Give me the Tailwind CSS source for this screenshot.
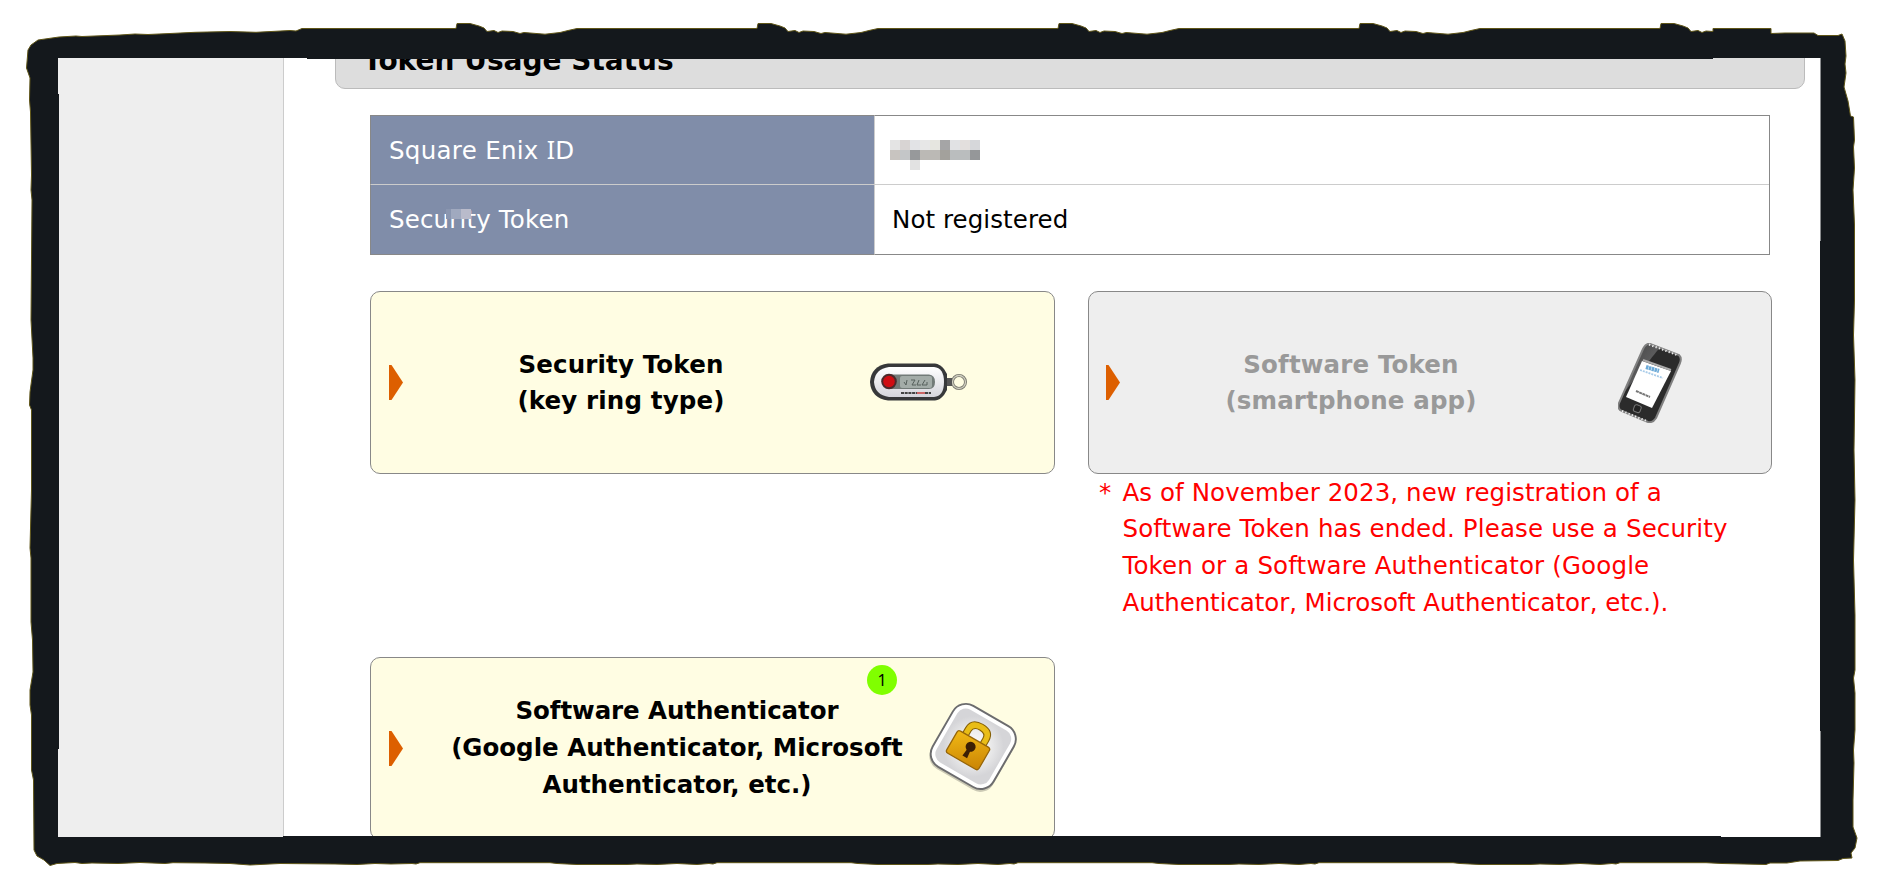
<!DOCTYPE html>
<html lang="en">
<head>
<meta charset="utf-8">
<title>Token Usage Status</title>
<script src="https://cdn.jsdelivr.net/npm/@tailwindcss/browser@4"></script>
</head>
<body class="bg-white">
<div class="relative w-[1878px] h-[894px] overflow-hidden pl-[58px] pt-[58px] pr-[57px] pb-[57px] font-['DejaVu_Sans',sans-serif] text-[24.5px] leading-[36.75px] text-black">
  <div class="flex h-full overflow-hidden">
    <aside class="w-[226px] shrink-0 bg-[#eeeeee] border-r border-[#cccccc]"></aside>
    <main class="flex-1 pl-[51px] pr-[16px] overflow-hidden">
      <h1 class="-mt-[29px] h-[60px] flex items-end rounded-[10px] border border-[#bbbbbb] bg-[#dddddd] pl-[27px] pb-[9px] text-[28px] leading-9 font-bold"><span>Token Usage Status</span></h1>

      <div class="ml-[35px] mt-[26px] w-[1400px] grid grid-cols-[504px_1fr] h-[140px] grid-rows-[69px_71px] border-r border-[#888888]">
        <div class="bg-[#808da9] border-t border-l border-[#888888] text-white pl-[18px] pt-[16px]"><span class="tracking-[0.3px]">Square Enix <span class="font-['Noto_Sans']">I</span>D</span></div>
        <div class="border-t border-l border-t-[#888888] border-l-[#cccccc] pl-[15px] pt-[24px]">
          <div class="grid grid-cols-[repeat(9,10px)] auto-rows-[10px]">
            <i class="bg-[#e4e4e4]"></i><i class="bg-[#d8d4d3]"></i><i class="bg-[#e2e3e6]"></i><i class="bg-[#e7e7e7]"></i><i class="bg-[#e6e6e0]"></i><i class="bg-[#a5a5a6]"></i><i class="bg-[#e1e2e4]"></i><i class="bg-[#e3dfdd]"></i><i class="bg-[#d6d7da]"></i>
            <i class="bg-[#c8c4c0]"></i><i class="bg-[#c4c6c8]"></i><i class="bg-[#97999b]"></i><i class="bg-[#bbb9b5]"></i><i class="bg-[#bbb9b5]"></i><i class="bg-[#a3a19c]"></i><i class="bg-[#babdbe]"></i><i class="bg-[#babdbe]"></i><i class="bg-[#959799]"></i>
            <i></i><i></i><i class="bg-[#e2e2e2]"></i>
          </div>
        </div>
        <div class="relative bg-[#808da9] border-y border-l border-t-[#cccccc] border-b-[#888888] border-l-[#888888] text-white pl-[18px] pt-[17px]"><span class="tracking-[0.16px]">Security Token</span>
          <div class="absolute left-[75px] top-[24px] flex h-[10px]"><i class="w-[5px] bg-[#8a96b0]"></i><i class="w-[10px] bg-[#a0a9bf]"></i><i class="w-[10px] bg-[#b9bbcb]"></i></div>
        </div>
        <div class="border-y border-l border-t-[#cccccc] border-b-[#888888] border-l-[#cccccc] pl-[17px] pt-[17px]"><span class="tracking-[0.07px]">Not registered</span></div>
      </div>

      <div class="ml-[35px] mt-[36px] grid grid-cols-[685px_684px] gap-x-[33px] font-bold text-center">
        <div class="h-[183px] flex items-center rounded-[10px] border border-[#888888] bg-[#fffde3] pl-[18px]">
          <svg class="mb-px w-[14px] h-[35px] shrink-0" viewBox="0 0 14 35"><path d="M0 0H2.5L14 17.5 2.5 35H0Z" fill="#dd5f00"/></svg>
          <div class="w-[436px] shrink-0 leading-9 tracking-[0.15px]"><span>Security Token<br>(key ring type)</span></div>
          <svg class="ml-[30px] mb-[2px] w-[99px] h-[40px] shrink-0" viewBox="0 0 99 40">
            <defs><linearGradient id="fob" x2="0" y2="1"><stop stop-color="#fff"/><stop offset="1" stop-color="#d5d5dc"/></linearGradient></defs>
            <circle cx="90" cy="20" r="6.5" fill="none" stroke="#77776d" stroke-width="3"/><circle cx="90" cy="20" r="6.5" fill="none" stroke="#d0cec0" stroke-width="1.3"/>
            <path d="M75 16H83V24H75Z" fill="#555"/>
            <path d="M19 1.500H66Q71 2 75 7L78 12V28L75 33Q71 38 66 38.500H19Q2 36 1 20Q2 4 19 1.500Z" fill="#37383a"/>
            <path d="M20 5H65Q75 6 75 20T65 35H20Q6 33 5 20Q6 7 20 5Z" fill="url(#fob)"/>
            <path d="M19 12.500H60Q66 13 66 20T60 27H19Z" fill="#727b78"/><rect x="31" y="14" width="32" height="12" rx="2" fill="#a3aca8"/>
            <path d="M35 20 37 23 38 18M42 18H46L43 23H47M50 18 48 23H52M56 18 53 23H58V20" fill="none" stroke="#56605c" stroke-width="1"/>
            <circle cx="20" cy="19.500" r="7.800" fill="#4b2a2b"/><circle cx="20" cy="19.500" r="5.800" fill="#cf0d12"/>
            <path d="M32 31H48M56 31H62" stroke="#444" stroke-width="2" stroke-dasharray="3 .7"/><path d="M48 31H56" stroke="#c66" stroke-width="2"/>
          </svg>
        </div>
        <div class="h-[183px] flex items-center rounded-[10px] border border-[#888888] bg-[#eeeeee] pl-[17px] text-[#999999]">
          <svg class="mb-px w-[14px] h-[35px] shrink-0" viewBox="0 0 14 35"><path d="M0 0H2.5L14 17.5 2.5 35H0Z" fill="#dd5f00"/></svg>
          <div class="ml-px w-[460px] shrink-0 leading-9 tracking-[0.15px]"><span>Software Token<br>(smartphone app)</span></div>
          <svg class="ml-[37px] w-[64px] h-[80px] shrink-0" viewBox="0 0 64 80">
            <defs><linearGradient id="ph" x2="1" y2="1"><stop stop-color="#3c3c3c"/><stop offset=".35" stop-color="#5b5b5c"/><stop offset=".36" stop-color="#2b2b2b"/></linearGradient></defs>
            <path d="M32 1 61 12Q64 15 62 20L38 75Q35 80 30 79L4 68Q-1 66 1 60L25 6Q28 0 32 1Z" fill="url(#ph)" stroke="#808080" stroke-width="2"/>
            <path d="M31 1.500 60 12.500M4 68 30 78.500" stroke="#eee" stroke-width="2" stroke-dasharray="1.300 2.200"/>
            <path d="M24 18 53 28 34 65 8 54Z" fill="#fff"/><path d="M25 17 53 27" stroke="#aaa" stroke-width="2"/>
            <path d="M28 24 41 28" stroke="#6caad8" stroke-width="4" stroke-dasharray="2.500 .5"/><path d="M22 27 45 35" stroke="#a9cce9" stroke-width="1.800" stroke-dasharray="2 1"/>
            <path d="M18 48 32 54" stroke="#777" stroke-width="2" stroke-dasharray="3 .5"/>
            <rect x="16" y="62" width="7" height="7" rx="2" transform="rotate(20 19 65)" fill="#222" stroke="#777"/>
          </svg>
        </div>
        <div></div>
        <div class="flex h-[183px] pl-[11px] pt-[0.5px] font-normal text-left text-[#ff0000]">
          <span class="w-[23.500px] shrink-0">*</span>
          <p class="whitespace-nowrap"><span class="tracking-[0.08px]">As of November 2023, new registration of a</span><br><span class="tracking-[0.14px]">Software Token has ended. Please use a Security</span><br><span class="tracking-[0.16px]">Token or a Software Authenticator (Google</span><br><span class="tracking-[-0.07px]">Authenticator, Microsoft Authenticator, etc.).</span></p>
        </div>
        <div class="relative h-[183px] flex items-center rounded-[10px] border border-[#888888] bg-[#fffde3] pl-[18px]">
          <svg class="mb-px w-[14px] h-[35px] shrink-0" viewBox="0 0 14 35"><path d="M0 0H2.5L14 17.5 2.5 35H0Z" fill="#dd5f00"/></svg>
          <div class="ml-[40px] w-[468px] shrink-0 whitespace-nowrap"><span class="tracking-[-0.08px]">Software Authenticator</span><br><span>(Google Authenticator, Microsoft</span><br><span>Authenticator, etc.)</span></div>
          <svg class="ml-[13px] mb-[2px] w-[98px] h-[98px] shrink-0" viewBox="0 0 92 92">
            <defs><radialGradient id="pl"><stop stop-color="#fff"/><stop offset=".5" stop-color="#eee"/><stop offset="1" stop-color="#d5d5d8"/></radialGradient>
            <linearGradient id="lk" x2="1" y2="1"><stop stop-color="#f2ba15"/><stop offset="1" stop-color="#c98304"/></linearGradient></defs>
            <g transform="rotate(30 46 45)">
              <rect x="13" y="13" width="67" height="67" rx="14" fill="#0003"/>
              <rect x="13" y="11.500" width="66" height="66" rx="14" fill="#fff" stroke="#6c6c6e" stroke-width="1.800"/>
              <rect x="17.500" y="16" width="57" height="57" rx="9" fill="url(#pl)"/>
              <path d="M34 41V33Q34 25 43.500 25T53 33V41" fill="none" stroke="#866006" stroke-width="7"/>
              <path d="M34 41V33Q34 25 43.500 25T53 33V41" fill="none" stroke="#e9bd17" stroke-width="5"/>
              <rect x="26" y="38" width="35" height="24" rx="2.500" fill="url(#lk)" stroke="#966508" stroke-width="1.200"/>
              <circle cx="44" cy="46" r="4.700" fill="#3b1f05"/><path d="M42.500 48H45.500L46.500 57H41.500Z" fill="#3b1f05"/>
            </g>
          </svg>
          <span class="absolute left-[496px] top-[7px] size-[30px] rounded-full bg-[#80ff00] text-[16px] leading-[30px] font-normal font-['Noto_Sans']">1</span>
        </div>
      </div>
    </main>
  </div>

  <!-- ragged ink frame around the panel -->
  <svg class="absolute inset-0 w-[1878px] h-[894px]" viewBox="0 0 1878 894">
    <mask id="opening" maskUnits="userSpaceOnUse" x="0" y="0" width="1878" height="894">
      <rect width="1878" height="894" fill="#fff"/>
      <path fill="#000" d="M59 94V749H58V837H283V836H1721V837H1820.500V731H1820V241H1820.500V58H1713V59H307V58H58V94Z"/>
    </mask>
    <path mask="url(#opening)" fill="#14181c" stroke="#5f5517" stroke-width="1" stroke-linejoin="round" d="M27 62 28 50 31 45 38 40 59 37 76 36 82 36.500 120 35 135 34 148 34.500 170 33.500 195 32.300 230 31.500 256 32.300 290 30.500 296 31 302 28.500
    H456L457 23.500H470L479 26 484 28 487 31.500 494 30.500 498 32.500 502 31 513 31.500 520 33.500 524 32.500 545 34.200 560 32.500 568 30.500 577 28.500
    H757L758 23.500H771L780 26 785 28 788 31.500 795 30.500 799 32.500 803 31 814 31.500 821 33.500 825 32.500 846 34.200 861 32.500 869 30.500 878 28.500
    H1058L1059 23.500H1072L1081 26 1086 28 1089 31.500 1096 30.500 1100 32.500 1104 31 1115 31.500 1122 33.500 1126 32.500 1147 34.200 1162 32.500 1170 30.500 1179 28.500
    H1359L1360 23.500H1373L1382 26 1387 28 1390 31.500 1397 30.500 1401 32.500 1405 31 1416 31.500 1423 33.500 1427 32.500 1448 34.200 1463 32.500 1471 30.500 1480 28.500
    H1660L1661 23.500H1674L1683 26 1688 28 1691 31.500 1698 30.500 1702 32.500 1706 31 1713 31.500V28.500H1771V33.500L1785 33H1814L1818 35.500H1838L1842 34 1845 41 1846 56 1845 64 1846 73 1844 87 1848 101 1850.500 116 1853.500 117 1854.500 140 1853.500 147 1854.500 168 1853 190 1854.500 225V300L1853.500 335 1855 380 1854 450 1855 500 1853.500 560 1855 615 1855 670 1853.500 678 1855 693V730L1853.500 750 1854 763 1853 800V827L1857 838 1855 848 1851 853 1852 858 1843 858.500 1838 860.500 1800 861 1787 863 1770 863 1766 864.500 1722 863.500
    1706 862.700H1620L1616 864 1612 863.500 1600 864.500 1580 863.500 1560 864.500 1540 864 1530 864.500H1480L1460 863.500 1453 862.700H1319L1315 864 1311 863.500 1299 864.500 1279 863.500 1259 864.500 1239 864 1229 864.500H1179L1159 863.500 1152 862.700H1018L1014 864 1010 863.500 998 864.500 978 863.500 958 864.500 938 864 928 864.500H878L858 863.500 851 862.700H717L713 864 709 863.500 697 864.500 677 863.500 657 864.500 637 864 627 864.500H577L557 863.500 550 862.700H420L416 864 412 863.500 391 864 375 863.500 357 864.500 335 864 280 863.500 250 865 230 863.500 205 863 173 862.700 165 863.500 140 862.500 118 863.500 92 863 82 863.500 75 862.500 57 863.500 50 865.500 44 860 37 856 34 850 33.500 780 31.500 770 31.500 715 30 705 30 690 33 672 32.500 640 31 622 31 558 30 548 31.500 490 31.500 410 29.500 405 30 392 33 370 33 358 31 320 32 200 31 190 31.500 175 30.500 112 29.500 100 30 78 26.500 68Z"/>
  </svg>
</div>
</body>
</html>
